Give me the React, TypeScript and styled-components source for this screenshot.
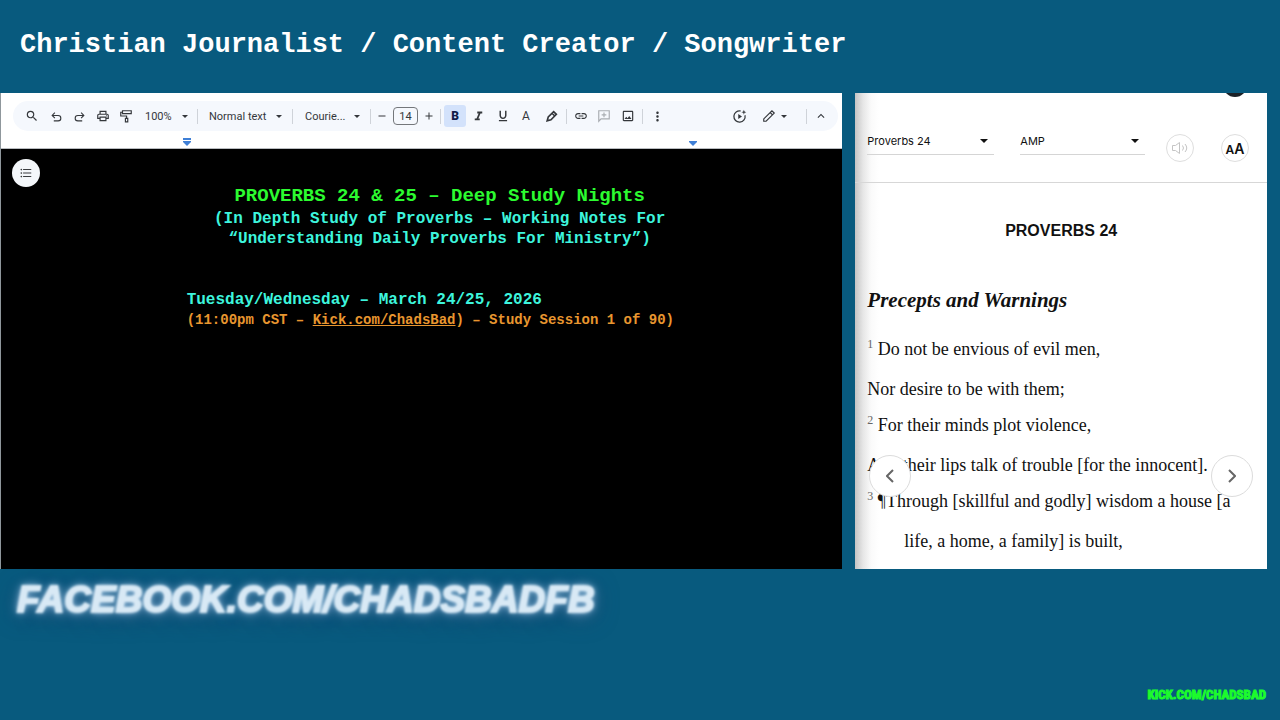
import React from "react";
import styled, { createGlobalStyle, css } from "styled-components";
import {
  MdSearch,
  MdOutlinePrint,
  MdFormatItalic,
  MdFormatUnderlined,
  MdInsertLink,
  MdOutlineImage,
  MdMoreVert,
  MdKeyboardArrowUp,
  MdFormatListBulleted,
  MdAdd,
  MdRemove,
} from "react-icons/md";

const GlobalStyle = createGlobalStyle`
  *, *::before, *::after { box-sizing: border-box; }
  body { margin: 0; background: #085a7e; }
  button, input, select { font: inherit; color: inherit; margin: 0; }
`;

const mono = css`
  font-family: "Liberation Mono", "Courier New", monospace;
  font-weight: 700;
`;

const Page = styled.div`
  min-height: 100vh;
  display: flex;
  flex-direction: column;
  background: #085a7e;
`;

const Banner = styled.header`
  padding: 29px 20px 32px;
`;

const BannerTitle = styled.h1`
  ${mono}
  margin: 0;
  font-size: 27px;
  line-height: 32px;
  color: #fff;
`;

const Stage = styled.main`
  display: flex;
  gap: 13px;
  padding-right: 13px;
  align-items: stretch;
`;

const Docs = styled.section`
  flex: 842 1 0;
  min-width: 0;
  display: flex;
  flex-direction: column;
  background: #fff;
  border-left: 1px solid #8f979c;
`;

const Toolbar = styled.div`
  display: flex;
  align-items: center;
  height: 30px;
  margin: 8px 4px 0 12px;
  padding: 0 6px;
  border-radius: 15px;
  background: #f5f8fd;
  color: #34373b;
  font-family: Roboto, "Liberation Sans", sans-serif;
  font-size: 11px;
`;

const Tool = styled.button<{ $w?: number; $muted?: boolean; $on?: boolean }>`
  flex: none;
  display: flex;
  align-items: center;
  justify-content: center;
  width: ${(p) => p.$w ?? 23}px;
  height: 22px;
  padding: 0;
  border: 0;
  border-radius: 3px;
  background: ${(p) => (p.$on ? "#d3e2fb" : "transparent")};
  color: ${(p) => (p.$muted ? "#a9adb2" : p.$on ? "#101c48" : "inherit")};
  font-size: 14px;
  font-weight: ${(p) => (p.$on ? 900 : 400)};
`;

const Letter = styled.span`
  font-size: 12px;
  line-height: 14px;
`;

const Divider = styled.span<{ $l?: number; $r?: number }>`
  flex: none;
  width: 1px;
  height: 15px;
  margin: 0 ${(p) => p.$r ?? 0}px 0 ${(p) => p.$l ?? 0}px;
  background: #cfd3d9;
`;

const Spacer = styled.span`
  flex: 1;
`;

const Pick = styled.label<{ $w: number; $indent?: number }>`
  flex: none;
  display: flex;
  align-items: center;
  width: ${(p) => p.$w}px;
  padding-left: ${(p) => p.$indent ?? 0}px;
  select {
    flex: 1;
    min-width: 0;
    appearance: none;
    border: 0;
    padding: 0;
    background: transparent;
  }
  svg {
    flex: none;
  }
`;

const SizeInput = styled.input`
  flex: none;
  width: 25px;
  height: 18px;
  padding: 0;
  border: 1px solid #74777b;
  border-radius: 4px;
  background: transparent;
  text-align: center;
`;

const Ruler = styled.div`
  display: flex;
  justify-content: center;
  height: 18px;
  padding: 7px 0 0 36px;
  border-bottom: 1px solid #b9bcc0;
`;

const RulerSpan = styled.div`
  display: flex;
  justify-content: space-between;
  width: 516px;
`;

const Canvas = styled.div`
  position: relative;
  flex: 1;
  display: flex;
  justify-content: center;
  padding: 35px 0 0 36px;
  background: #000;
`;

const OutlineButton = styled.button`
  position: absolute;
  left: 11px;
  top: 10px;
  width: 28px;
  height: 28px;
  display: flex;
  align-items: center;
  justify-content: center;
  padding: 0;
  border: 0;
  border-radius: 50%;
  background: #f4f7fa;
  color: #3a3d40;
  font-size: 14px;
`;

const Sheet = styled.article`
  ${mono}
  width: 506px;
  white-space: nowrap;
`;

const SheetTitle = styled.h2`
  margin: 0;
  font-size: 19px;
  line-height: 25px;
  text-align: center;
  color: #2cfb30;
`;

const Subtitle = styled.p`
  margin: 0;
  font-size: 16px;
  line-height: 20px;
  text-align: center;
  color: #3df5dd;
`;

const DateLine = styled.p`
  margin: 41px 0 0;
  font-size: 16px;
  line-height: 20px;
  color: #3df5dd;
`;

const SessionLine = styled.p`
  margin: 0;
  font-size: 14px;
  line-height: 20px;
  color: #e8962f;
  a {
    color: inherit;
  }
`;

const Reader = styled.section`
  position: relative;
  flex: 412 1 0;
  min-width: 0;
  overflow: hidden;
  background: linear-gradient(90deg, #c4c4c4 0, #e6e6e6 8px, #fafafa 16px, #fff 24px);
  color: #111;
`;

const ReaderBar = styled.div`
  display: flex;
  align-items: flex-start;
  height: 90px;
  padding: 34px 18px 0 12px;
  border-bottom: 1px solid #d7d7d7;
  font-family: Inter, "Liberation Sans", sans-serif;
  font-size: 11px;
`;

const ReaderPick = styled(Pick)`
  flex: 0 1 ${(p) => p.$w}px;
  height: 28px;
  padding-right: 6px;
  border-bottom: 1px solid #d5d5d5;
  & + & {
    margin-left: 26px;
  }
`;

const RoundTool = styled.button<{ $push?: boolean }>`
  flex: none;
  display: flex;
  align-items: center;
  justify-content: center;
  width: 28px;
  height: 28px;
  margin: 7px 0 0 ${(p) => (p.$push ? "auto" : "27px")};
  padding: 0;
  border: 1px solid #dedede;
  border-radius: 50%;
  background: #fff;
`;

const CaseLabel = styled.span`
  font-weight: 600;
  font-size: 14px;
  small {
    font-size: 12px;
  }
`;

const Avatar = styled.span`
  position: absolute;
  top: -20px;
  right: 20px;
  width: 24px;
  height: 24px;
  border-radius: 50%;
  background: #1b2126;
`;

const Passage = styled.article`
  padding: 38px 12px 10px;
  font-family: "Liberation Serif", "Times New Roman", serif;
  font-size: 18px;
  white-space: nowrap;
`;

const Chapter = styled.h2`
  margin: 0;
  font: 700 16px/20px "Liberation Sans", Arial, sans-serif;
  text-align: center;
`;

const Section = styled.h3`
  margin: 47px 0 19px;
  font-size: 21px;
  line-height: 24px;
  font-style: italic;
`;

const Verse = styled.p`
  margin: 0;
  line-height: 36px;
  sup {
    font-size: 12px;
    line-height: 0;
    color: #666;
  }
`;

const SecondLine = styled(Verse)<{ $hanging?: boolean }>`
  margin-top: 4px;
  padding-left: ${(p) => (p.$hanging ? 37 : 0)}px;
`;

const Turn = styled.button<{ $side: "left" | "right" }>`
  position: absolute;
  top: 362px;
  ${(p) => p.$side}: 14px;
  width: 42px;
  height: 42px;
  display: flex;
  align-items: center;
  justify-content: center;
  padding: 0;
  border: 1px solid #dcdcdc;
  border-radius: 50%;
  background: #fff;
`;

const Footer = styled.footer`
  flex: 1;
  display: flex;
  flex-direction: column;
  justify-content: space-between;
  padding: 11px 14px 15px 17px;
`;

const GlowLink = styled.a`
  align-self: flex-start;
  font: italic 700 37px/40px "Liberation Sans", Arial, sans-serif;
  color: #d8e9f5;
  -webkit-text-stroke: 2px #d8e9f5;
  text-decoration: none;
  filter: blur(1px);
  text-shadow: 0 0 4px #c4def2, 0 0 8px #86b2d6, 0 2px 14px #4d7fac, 0 4px 24px #2a4468;
`;

const KickLink = styled.a`
  align-self: flex-end;
  font: 700 13px/20px Impact, "Roboto Condensed", "Open Sans Condensed", "Noto Sans Condensed", sans-serif;
  color: #1dfb2c;
  -webkit-text-stroke: 1px #1dfb2c;
  text-decoration: none;
`;

const Caret = ({ w = 6 }: { w?: number }) => (
  <svg width={w} height={w / 2} viewBox="0 0 8 4" fill="currentColor" aria-hidden="true">
    <path d="M0 0h8L4 4z" />
  </svg>
);

const Glyph = ({ size = 14, sw = 2, children }: { size?: number; sw?: number; children: React.ReactNode }) => (
  <svg
    width={size}
    height={size}
    viewBox="0 0 24 24"
    fill="none"
    stroke="currentColor"
    strokeWidth={sw}
    aria-hidden="true"
  >
    {children}
  </svg>
);

export default function App() {
  return (
    <Page>
      <GlobalStyle />
      <Banner>
        <BannerTitle>Christian Journalist / Content Creator / Songwriter</BannerTitle>
      </Banner>

      <Stage>
        <Docs>
          <Toolbar role="toolbar" aria-label="Formatting">
            <Tool $w={26} aria-label="Search"><MdSearch /></Tool>
            <Tool aria-label="Undo">
              <Glyph size={13}><path d="M9 5 4 10l5 5M4 10h11a5 5 0 0 1 0 10H7" /></Glyph>
            </Tool>
            <Tool aria-label="Redo">
              <Glyph size={13}><path d="m15 5 5 5-5 5M20 10H9a5 5 0 0 0 0 10h8" /></Glyph>
            </Tool>
            <Tool aria-label="Print"><MdOutlinePrint /></Tool>
            <Tool aria-label="Paint format">
              <Glyph>
                <path d="M6 3h15v5H6zM6 5.500H3V12h10v4M11 16h4v6h-4z" />
              </Glyph>
            </Tool>
            <Pick $w={51} $indent={8}>
              <select aria-label="Zoom"><option>100%</option></select>
              <Caret />
            </Pick>
            <Divider $l={9} $r={11} />
            <Pick $w={73}>
              <select aria-label="Styles"><option>Normal text</option></select>
              <Caret />
            </Pick>
            <Divider $l={10} $r={12} />
            <Pick $w={55}>
              <select aria-label="Font"><option>Courie...</option></select>
              <Caret />
            </Pick>
            <Divider $l={10} />
            <Tool $w={22} aria-label="Decrease font size"><MdRemove size={12} /></Tool>
            <SizeInput aria-label="Font size" defaultValue="14" />
            <Tool $w={22} aria-label="Increase font size"><MdAdd size={12} /></Tool>
            <Divider $r={3} />
            <Tool $w={22} $on aria-label="Bold"><Letter>B</Letter></Tool>
            <Tool $w={25} aria-label="Italic"><MdFormatItalic size={15} /></Tool>
            <Tool aria-label="Underline"><MdFormatUnderlined size={14} /></Tool>
            <Tool $w={24} aria-label="Text colour"><Letter>A</Letter></Tool>
            <Tool $w={26} aria-label="Highlight colour">
              <Glyph size={13} sw={3}><path d="m4 20 2-7L16 3l5 5-10 10zM13 6l5 5" /></Glyph>
            </Tool>
            <Divider $l={2} $r={2} />
            <Tool aria-label="Insert link"><MdInsertLink /></Tool>
            <Tool $w={24} $muted aria-label="Add comment">
              <Glyph><path d="M3 21V3h18v14H7zM12 6v8M8 10h8" /></Glyph>
            </Tool>
            <Tool $w={24} aria-label="Insert image"><MdOutlineImage /></Tool>
            <Divider $l={2} $r={3} />
            <Tool aria-label="More"><MdMoreVert size={15} /></Tool>
            <Spacer />
            <Tool $w={36} aria-label="Activity">
              <Glyph size={15}>
                <path d="M14 3.200A9 9 0 1 0 20.800 10" />
                <path d="M10 8v8l6-4zM19 1l1 3 3 1-3 1-1 3-1-3-3-1 3-1z" fill="currentColor" stroke="none" />
              </Glyph>
            </Tool>
            <Tool $w={24} aria-label="Editing mode">
              <Glyph><path d="M3 21v-4L17 3l4 4L7 21zM14 6l4 4" /></Glyph>
            </Tool>
            <Caret w={6} />
            <Divider $l={19} $r={2} />
            <Tool aria-label="Hide menus"><MdKeyboardArrowUp /></Tool>
          </Toolbar>
          <Ruler>
            <RulerSpan>
              <svg width="10" height="10" viewBox="0 0 10 10" fill="#3f7fd6" aria-hidden="true">
                <path d="M1 0h8v2H1zM1 3h8v1L5 8 1 4z" />
              </svg>
              <svg width="10" height="10" viewBox="0 0 10 10" fill="#3f7fd6" aria-hidden="true">
                <path d="M1 3h8v1L5 8 1 4z" />
              </svg>
            </RulerSpan>
          </Ruler>
          <Canvas>
            <OutlineButton aria-label="Show outline"><MdFormatListBulleted /></OutlineButton>
            <Sheet>
              <SheetTitle>PROVERBS 24 &amp; 25 – Deep Study Nights</SheetTitle>
              <Subtitle>
                (In Depth Study of Proverbs – Working Notes For
                <br />
                “Understanding Daily Proverbs For Ministry”)
              </Subtitle>
              <DateLine>Tuesday/Wednesday – March 24/25, 2026</DateLine>
              <SessionLine>
                (11:00pm CST – <a href="#kick">Kick.com/ChadsBad</a>) – Study Session 1 of 90)
              </SessionLine>
            </Sheet>
          </Canvas>
        </Docs>

        <Reader>
          <Avatar />
          <ReaderBar>
            <ReaderPick $w={127}>
              <select aria-label="Chapter"><option>Proverbs 24</option></select>
              <Caret w={8} />
            </ReaderPick>
            <ReaderPick $w={125}>
              <select aria-label="Translation"><option>AMP</option></select>
              <Caret w={8} />
            </ReaderPick>
            <RoundTool $push aria-label="Listen">
              <svg width="18" height="14" viewBox="0 0 18 14" fill="none" stroke="#c4c4c4" aria-hidden="true">
                <path d="M1.500 4.500h3l4-3v11l-4-3h-3zM11.500 4.500q2 2.500 0 5M14 3q3.500 4 0 8" />
              </svg>
            </RoundTool>
            <RoundTool aria-label="Text size">
              <CaseLabel><small>A</small>A</CaseLabel>
            </RoundTool>
          </ReaderBar>
          <Passage>
            <Chapter>PROVERBS 24</Chapter>
            <Section>Precepts and Warnings</Section>
            <Verse><sup>1</sup> Do not be envious of evil men,</Verse>
            <SecondLine>Nor desire to be with them;</SecondLine>
            <Verse><sup>2</sup> For their minds plot violence,</Verse>
            <SecondLine>And their lips talk of trouble [for the innocent].</SecondLine>
            <Verse><sup>3</sup> ¶Through [skillful and godly] wisdom a house [a</Verse>
            <SecondLine $hanging>life, a home, a family] is built,</SecondLine>
          </Passage>
          <Turn $side="left" aria-label="Previous chapter">
            <svg width="8" height="14" viewBox="0 0 8 14" fill="none" stroke="#666" strokeWidth="2" aria-hidden="true">
              <path d="M7 1 1 7l6 6" />
            </svg>
          </Turn>
          <Turn $side="right" aria-label="Next chapter">
            <svg width="8" height="14" viewBox="0 0 8 14" fill="none" stroke="#666" strokeWidth="2" aria-hidden="true">
              <path d="m1 1 6 6-6 6" />
            </svg>
          </Turn>
        </Reader>
      </Stage>

      <Footer>
        <GlowLink href="#facebook">FACEBOOK.COM/CHADSBADFB</GlowLink>
        <KickLink href="#kick">KICK.COM/CHADSBAD</KickLink>
      </Footer>
    </Page>
  );
}
